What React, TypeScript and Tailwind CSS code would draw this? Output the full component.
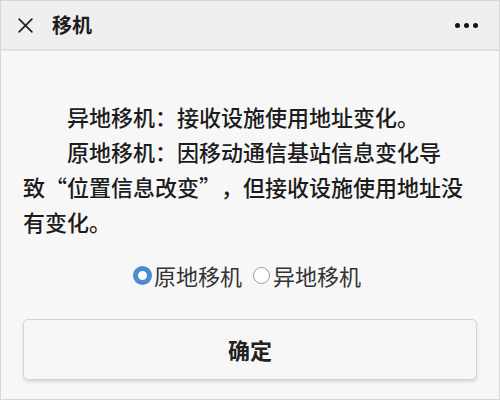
import React, { useState } from 'react';

const CloseIcon: React.FC<React.SVGProps<SVGSVGElement>> = (props) => (
    <svg xmlns="http://www.w3.org/2000/svg" viewBox="0 0 16 16" fill="none" stroke="currentColor" strokeWidth="1.6" strokeLinecap="round" {...props}><line x1="2" y1="2" x2="14" y2="14"></line><line x1="14" y1="2" x2="2" y2="14"></line></svg>
);

const Radio: React.FC<{ checked: boolean; label: string; onClick: () => void }> = ({ checked, label, onClick }) => (
    <label className="flex items-center cursor-pointer" onClick={onClick}>
        {checked ? (
            <span className="w-[19px] h-[19px] rounded-full border-[5px] border-[#4a8bd4] bg-white shrink-0" />
        ) : (
            <span className="w-[17px] h-[17px] rounded-full border border-[#9a9a9a] bg-white shrink-0 mx-[1px]" />
        )}
        <span className="ml-[2px] text-[22px] text-[#333]">{label}</span>
    </label>
);

// full-width quote cells, as a CJK phone font draws them
const OpenQ = () => <span className="inline-block w-[22px] text-right">“</span>;
const CloseQ = () => <span className="inline-block w-[22px] text-left">”</span>;

export default function App() {
    const [choice, setChoice] = useState<'yuan' | 'yi'>('yuan');

    return (
        <div
            className="w-[500px] h-[400px] border border-[#d6d6d6] bg-[#f7f7f7] flex flex-col text-[#1c1c1c]"
            style={{ fontFamily: '"Noto Sans CJK SC", "Noto Sans", sans-serif' }}
        >
            <header className="h-[50px] bg-[#efefef] border-b-2 border-[#e2e2e2] flex items-center px-[16px] shrink-0">
                <CloseIcon className="w-[17px] h-[17px] text-[#222]" />
                <h1 className="ml-[18px] text-[20px] font-bold leading-none">移机</h1>
                <div className="ml-auto flex gap-[4px] mr-[5px]">
                    <span className="w-[5px] h-[5px] rounded-full bg-[#111]" />
                    <span className="w-[5px] h-[5px] rounded-full bg-[#111]" />
                    <span className="w-[5px] h-[5px] rounded-full bg-[#111]" />
                </div>
            </header>

            <div className="px-[22px] pt-[48px] text-[22px] leading-[35px] font-medium whitespace-nowrap">
                <p className="pl-[44px]">异地移机：接收设施使用地址变化。</p>
                <div>
                    <p className="pl-[44px]">原地移机：因移动通信基站信息变化导</p>
                    <p>致<OpenQ />位置信息改变<CloseQ />，但接收设施使用地址没</p>
                    <p>有变化。</p>
                </div>
            </div>

            <div className="flex justify-center gap-[10px] mt-[20px] pr-[6px]">
                <Radio checked={choice === 'yuan'} label="原地移机" onClick={() => setChoice('yuan')} />
                <Radio checked={choice === 'yi'} label="异地移机" onClick={() => setChoice('yi')} />
            </div>

            <div className="px-[22px] mt-[27px]">
                <button className="w-full h-[61px] rounded-[5px] border border-[#d4d4d4] bg-[#f6f6f6] shadow-[0_2px_3px_rgba(0,0,0,0.12)] text-[22px] font-bold text-[#222]">
                    确定
                </button>
            </div>
        </div>
    );
}
